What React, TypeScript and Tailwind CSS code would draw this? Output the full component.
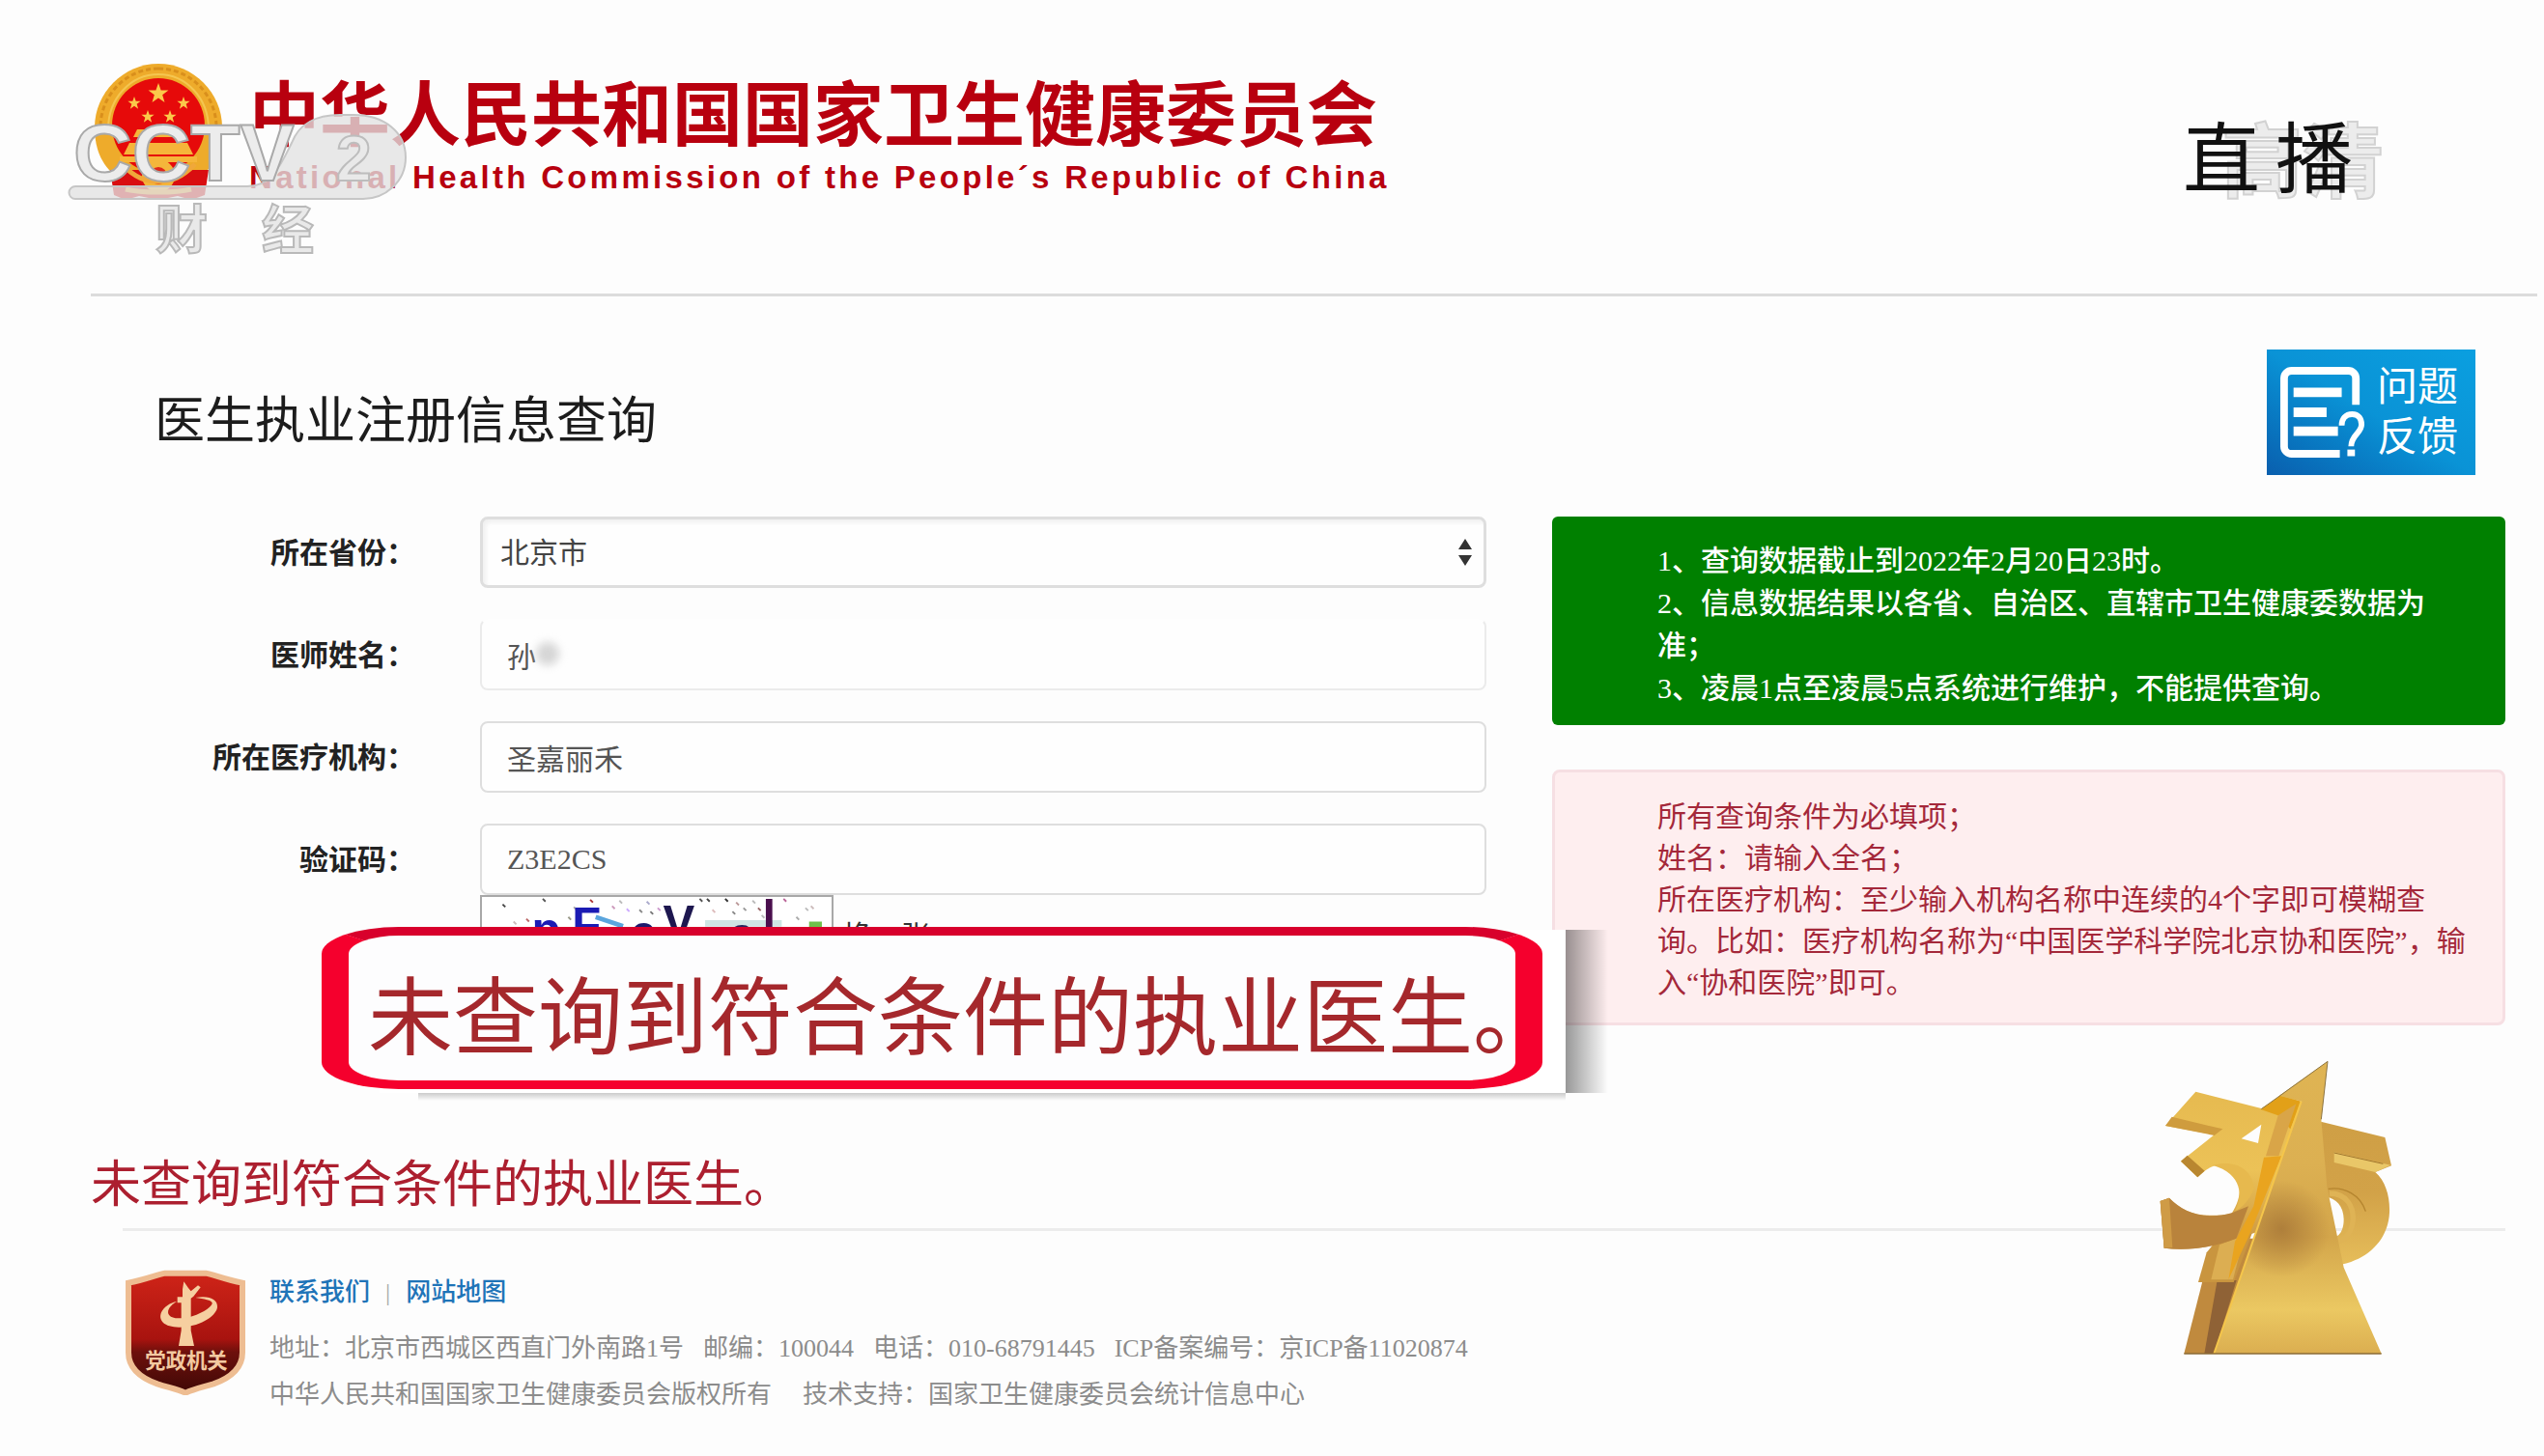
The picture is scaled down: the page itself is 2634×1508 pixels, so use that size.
import { useState } from "react";
import type { ReactNode } from "react";

const SANS = "font-['Liberation_Sans','Noto_Sans_CJK_SC',sans-serif]";
const SERIF = "font-['Liberation_Serif','Noto_Sans_CJK_SC',serif]";

const INPUT_CLASS =
  "h-[74px] w-full rounded-lg border-2 bg-[#fefefe] px-[26px] text-[30px] text-[#555] outline-none focus:border-neutral-400";

const NOTICES = [
  "1、查询数据截止到2022年2月20日23时。",
  "2、信息数据结果以各省、自治区、直辖市卫生健康委数据为准；",
  "3、凌晨1点至凌晨5点系统进行维护，不能提供查询。",
];

const HINTS = [
  "所有查询条件为必填项；",
  "姓名：请输入全名；",
  "所在医疗机构：至少输入机构名称中连续的4个字即可模糊查询。比如：医疗机构名称为“中国医学科学院北京协和医院”，输入“协和医院”即可。",
];

const NO_RESULT = "未查询到符合条件的执业医生。";

// [x, y, colour] of the noise dots behind the captcha letters
const CAPTCHA_DOTS: [number, number, string][] = [
  [14, 8, "#444"],
  [58, 2, "#555"],
  [110, 3, "#a33"],
  [92, 11, "#aaa"],
  [86, 22, "#998"],
  [134, 10, "#c9b"],
  [142, 4, "#bbb"],
  [150, 13, "#caf"],
  [164, 14, "#888"],
  [172, 5, "#aac"],
  [176, 16, "#777"],
  [184, 12, "#c9c"],
  [230, 2, "#555"],
  [238, 2, "#444"],
  [244, 14, "#dbb"],
  [258, 2, "#333"],
  [266, 16, "#888"],
  [270, 6, "#b99"],
  [278, 12, "#999"],
  [288, 4, "#bbb"],
  [294, 12, "#966"],
  [298, 20, "#bbb"],
  [322, 2, "#b69"],
  [336, 22, "#aaa"],
  [346, 12, "#bbb"],
  [352, 10, "#cbb"],
  [26, 27, "#cbb"],
  [40, 24, "#b66"],
];

function Star({ x, y, size }: { x: number; y: number; size: number }) {
  return (
    <path
      transform={`translate(${x} ${y}) scale(${size})`}
      d="M0-10 2.4-3.2 9.5-3.1 3.8 1.2 5.9 8.1 0 4-5.9 8.1-3.8 1.2-9.5-3.1-2.4-3.2Z"
      fill="#fbc94a"
    />
  );
}

function NationalEmblem() {
  return (
    <svg viewBox="0 0 132 144" className="h-36 w-[132px] shrink-0" role="img" aria-label="国徽">
      <path d="M66 2C102 2 132 32 132 68c0 26-10 42-24 52H24C10 110 0 94 0 68 0 32 30 2 66 2Z" fill="#eeab2b" />
      <path d="M66 7c33 0 60 27 60 61M66 7C33 7 6 34 6 68" fill="none" stroke="#d98f1c" strokeWidth="3" strokeDasharray="5 3" />
      <path d="M66 13c29 0 52 25 52 57M66 13C37 13 14 38 14 70" fill="none" stroke="#f5c650" strokeWidth="2" />
      <ellipse cx="66" cy="66" rx="48" ry="49" fill="#e60a0a" />
      <Star x={66} y={33} size={1.1} />
      <Star x={41} y={43} size={0.7} />
      <Star x={92} y={43} size={0.7} />
      <Star x={55} y={57} size={0.7} />
      <Star x={78} y={57} size={0.7} />
      <path d="M44 70h44l4 8H40ZM36 84h60l6 12H30ZM26 98h80v6H26Z" fill="#f6b53a" />
      <path d="M16 112h102l-4 26-14 5-14-4-20 4-20-4-14 4-12-5Z" fill="#d90d10" />
      <circle cx="66" cy="118" r="17" fill="#f4b63b" />
      <circle cx="66" cy="118" r="9" fill="#e0271a" />
      <path d="M28 106c14 14 24 18 38 18s24-4 38-18M32 132c16 4 52 4 68 0" fill="none" stroke="#f0a83a" strokeWidth="5" />
    </svg>
  );
}

function ChannelBug() {
  return (
    <div className="pointer-events-none absolute top-[116px] left-[70px] flex flex-col" aria-hidden="true">
      <svg viewBox="0 0 352 92" className="h-[92px] w-[352px]">
        <path
          d="M8 77H186C212 77 222 52 232 32 240 12 256 3 282 3h14c32 0 54 18 54 44S328 90 306 90H8A6 6 0 0 1 8 77Z"
          fill="#e2e2e2"
          fillOpacity="0.78"
          stroke="#c6c6c6"
          strokeWidth="2"
        />
        <text x="6" y="71" fontSize="84" fontWeight="700" fontFamily="Liberation Sans, sans-serif" fill="#ececec" stroke="#a9a9a9" strokeWidth="2">
          CCTV
        </text>
        <text x="278" y="71" fontSize="66" fontWeight="700" fontFamily="Liberation Sans, sans-serif" fill="#e9e9e9" stroke="#bdbdbd" strokeWidth="2">
          2
        </text>
      </svg>
      <div className="flex gap-14 pl-[91px] text-[54px] leading-[64px] font-bold text-[#e9e9e9] [-webkit-text-stroke:2px_#b9b9b9]">
        <span>财</span>
        <span>经</span>
      </div>
    </div>
  );
}

function LiveBug() {
  return (
    <div className="pointer-events-none absolute top-[114px] right-[166px] h-[108px] w-[208px]" aria-hidden="true">
      <span className="absolute top-1 right-0 text-[84px] leading-[104px] font-bold whitespace-nowrap text-[#ececec] [-webkit-text-stroke:2px_#d2d2d2]">
        高清
      </span>
      <span className="absolute top-0 left-0 flex gap-4 text-[80px] leading-[104px] whitespace-nowrap text-[#111]">
        <span>直</span>
        <span>播</span>
      </span>
    </div>
  );
}

function FeedbackButton() {
  return (
    <button
      type="button"
      className="flex h-[130px] w-[216px] shrink-0 cursor-pointer items-center gap-3 bg-linear-to-bl from-[#0a9fe0] via-[#0a93d6] to-[#0a5fae] pl-[14px] text-white"
    >
      <svg viewBox="0 0 90 96" className="h-24 w-[88px] shrink-0" fill="none" stroke="#fff">
        <path d="M80 40V12a8 8 0 0 0-8-8H12a8 8 0 0 0-8 8v72a8 8 0 0 0 8 8h51" strokeWidth="8" />
        <path d="M14 27h51M14 48h35M14 68h47" strokeWidth="10" />
        <path d="M65 62c0-7 4-12 11-12s10 5 10 11c0 9-11 11-11 23" strokeWidth="6" />
        <path d="M71 91h8" strokeWidth="7" />
      </svg>
      <span className="w-[86px] text-left text-[42px] leading-[52px]">
        问题
        <br />
        反馈
      </span>
    </button>
  );
}

function Field({ id, label, children }: { id: string; label: string; children: ReactNode }) {
  return (
    <div className="grid grid-cols-[430px_1fr] items-center gap-[67px]">
      <label htmlFor={id} className="text-right text-[30px] font-bold text-[#222]">
        {label}：
      </label>
      <div className="relative">{children}</div>
    </div>
  );
}

function Captcha() {
  return (
    <svg viewBox="0 0 366 72" className="h-[72px] w-[366px] border-2 border-[#a8a8a8] bg-white" role="img" aria-label="验证码图片">
      {CAPTCHA_DOTS.map(([x, y, color]) => (
        <path key={`${x}-${y}`} d={`M${x} ${y}l3 3`} stroke={color} strokeWidth="2" />
      ))}
      <path d="M116 22l30 10" stroke="#5aa5dd" strokeWidth="5" />
      <path d="M236 29h84" stroke="#cfe6e4" strokeWidth="7" />
      <path d="M350 30h14" stroke="#6fc04a" strokeWidth="6" />
      <g fontFamily="Liberation Sans, sans-serif" fontWeight="700" fontSize="52">
        <text x="46" y="54" fill="#1b1bb4">p</text>
        <text x="90" y="49" fill="#1b1bb4">F</text>
        <text x="154" y="57" fill="#1d1a6d">e</text>
        <text x="190" y="47" fill="#1d174f">V</text>
        <text x="262" y="59" fill="#26265c">a</text>
        <text x="299" y="40" fill="#4a0f4d">l</text>
      </g>
    </svg>
  );
}

function ResultCallout() {
  return (
    <div className="absolute top-[425px] left-[333px] w-[1288px] pb-1">
      <div className="absolute top-[3px] bottom-0 left-full w-11 bg-linear-to-r from-black/40 to-transparent" />
      <div className="absolute top-full right-0 left-[100px] h-2 bg-linear-to-b from-black/20 to-transparent" />
      <div className="absolute top-[3px] right-0 bottom-0 left-[60px] bg-white" />
      <p className="relative w-[1264px] rounded-[80px/28px] border-x-[28px] border-y-[9px] border-t-[#d8002c] border-r-[#f5002d] border-b-[#f5002d] border-l-[#f5002d] bg-[#fdfdfe] pt-6 pl-5 text-[88px] leading-[126px] whitespace-nowrap text-[#a5282c]">
        {NO_RESULT}
      </p>
    </div>
  );
}

function GovernmentShield() {
  return (
    <svg viewBox="24 36 378 388" className="h-[130px] w-[126px] shrink-0" role="img" aria-label="党政机关">
      <defs>
        <linearGradient id="shield" x1="0" y1="0" x2="0" y2="1">
          <stop offset="0" stopColor="#cf2418" />
          <stop offset="0.55" stopColor="#a8130f" />
          <stop offset="0.66" stopColor="#6d100c" />
          <stop offset="1" stopColor="#3f0806" />
        </linearGradient>
      </defs>
      <path
        d="M36 76C90 66 120 52 150 46h126c30 6 60 20 114 30v216c0 50-40 80-90 98-40 12-60 16-87 28-27-12-50-16-87-28-50-18-90-48-90-98Z"
        fill="url(#shield)"
        stroke="#eebd92"
        strokeWidth="18"
      />
      <g fill="#f6cfa0">
        <path d="M208 72l14 20 8 10 22-18 8 6-22 28-8 6v100l10 48h-48l8-48V138h-12v-18h16v-24Z" />
        <path d="M244 122c44-8 70 6 68 30-4 30-60 62-118 62-48 0-66-22-56-46 8-18 28-30 48-34-20 12-30 26-26 38 6 16 40 18 74 8 38-12 64-32 62-42-2-8-24-12-52-16Z" />
      </g>
      <text x="88" y="342" fontSize="64" fontWeight="700" fontFamily="Noto Sans CJK SC, sans-serif" fill="#f3c9a0">
        党政机关
      </text>
    </svg>
  );
}

function GoldTrophy() {
  return (
    <svg
      viewBox="160 80 735 930"
      className="pointer-events-none absolute right-[155px] bottom-[102px] h-[310px] w-[245px]"
      role="img"
      aria-label="315"
    >
      <defs>
        <linearGradient id="spire" x1="0" y1="0" x2="0" y2="1">
          <stop offset="0" stopColor="#dfb453" />
          <stop offset="0.35" stopColor="#dcb052" />
          <stop offset="0.6" stopColor="#d3a54a" />
          <stop offset="0.85" stopColor="#ebc862" />
          <stop offset="1" stopColor="#dbae50" />
        </linearGradient>
        <radialGradient id="spireShade" gradientUnits="userSpaceOnUse" cx="545" cy="610" r="150">
          <stop offset="0" stopColor="#a87838" stopOpacity="0.85" />
          <stop offset="1" stopColor="#a87838" stopOpacity="0" />
        </radialGradient>
        <linearGradient id="digit" x1="0" y1="0" x2="0" y2="1">
          <stop offset="0" stopColor="#e6ba50" />
          <stop offset="0.5" stopColor="#ecc257" />
          <stop offset="1" stopColor="#c99340" />
        </linearGradient>
        <linearGradient id="digitRight" x1="0" y1="0" x2="0" y2="1">
          <stop offset="0" stopColor="#cf9f45" />
          <stop offset="0.5" stopColor="#d2a248" />
          <stop offset="1" stopColor="#e6bd5a" />
        </linearGradient>
      </defs>

      {/* back leg of the spire */}
      <path d="M350 640 300 770 242 998H340L470 640Z" fill="#c08a3e" />
      <path d="M345 770h60L335 998h-30Z" fill="#8f6236" />
      <path d="M312 684 286 776h110l60-160h-90Z" fill="#c9953f" />
      <path d="M352 660 326 768h68l36-140Z" fill="#dcae52" />

      {/* right-hand five */}
      <path
        fillRule="evenodd"
        d="M670 278 866 326 886 414 836 434C868 462 882 510 880 560 876 640 820 700 736 720L660 690V280ZM684 512C712 514 738 540 738 580 738 608 730 625 716 634Z"
        fill="url(#digitRight)"
      />
      <path d="M708 372 884 412 836 434 708 404Z" fill="#e9c768" />
      <path d="M708 374 860 408" stroke="#a0752c" strokeWidth="3" />
      <path d="M690 486C740 478 790 505 806 556" fill="none" stroke="#b5852f" strokeWidth="4" />
      <path d="M694 500C745 500 772 540 766 590 760 625 742 645 716 650" fill="none" stroke="#dfb355" strokeWidth="16" />

      {/* left-hand three */}
      <path
        fillRule="evenodd"
        d="M278 184 482 236 550 192 602 214 590 300 470 620 404 640C340 665 260 680 180 670L168 524 196 514C235 560 300 580 390 562 415 525 422 480 408 448 380 400 335 398 284 450L232 400 336 318 184 290ZM482 286 420 330 472 344Z"
        fill="url(#digit)"
      />
      <path d="M184 290 204 262 362 300 336 320Z" fill="#cf9c3e" />
      <path d="M168 524 196 514C240 560 310 585 392 560L442 540 404 640C340 665 260 680 180 670Z" fill="#b9833c" />
      <path d="M168 524 196 514 206 668 180 670Z" fill="#cf9b46" />
      <path d="M232 400 252 382 306 430 284 450Z" fill="#b98730" />
      <path d="M330 412C400 395 450 420 460 484 440 530 420 545 400 555 424 510 426 440 330 412Z" fill="#e7b94e" />
      <path d="M482 240 540 196 606 214 572 300 534 258Z" fill="#e2a018" />
      <path d="M534 258 590 222 536 384H496Z" fill="#d9a548" />
      <path d="M490 388 545 384 440 640 380 768 400 650 458 540Z" fill="#e9a41f" />

      {/* spire */}
      <path d="M688 90 668 270 686 480 738 730 855 998H335L606 214 538 196Z" fill="url(#spire)" />
      <path d="M688 90 668 270 686 480 738 730 855 998H335L606 214 538 196Z" fill="url(#spireShade)" />
      <path d="M606 214 335 998" stroke="#f5c64b" strokeWidth="6" />
      <path d="M242 998H855" stroke="#8a6a34" strokeWidth="4" />
      <path d="M482 238 688 90 668 270" fill="none" stroke="#8d7440" strokeWidth="3" />
    </svg>
  );
}

export default function App() {
  const [province, setProvince] = useState("北京市");
  const [doctor, setDoctor] = useState("孙");
  const [hospital, setHospital] = useState("圣嘉丽禾");
  const [code, setCode] = useState("Z3E2CS");

  return (
    <div className={`relative min-h-screen overflow-hidden bg-[#fdfdfd] ${SERIF}`} lang="zh-CN">
      <header className={`mr-[7px] ml-[94px] flex gap-7 border-b-[3px] border-[#dcdcdc] pt-16 pb-24 pl-1 ${SANS}`}>
        <NationalEmblem />
        <div className="flex flex-col justify-end text-[#b8000f]">
          <h1 className="text-[73px] leading-[80px] font-bold whitespace-nowrap">中华人民共和国国家卫生健康委员会</h1>
          <p className="text-[33px] leading-[48px] font-bold tracking-widest whitespace-nowrap">
            National Health Commission of the People´s Republic of China
          </p>
        </div>
      </header>

      <main>
        <div className="flex items-center justify-between pt-[55px] pr-[71px] pl-40">
          <h2 className="pt-5 text-[52px] text-[#1c1c1c]">医生执业注册信息查询</h2>
          <FeedbackButton />
        </div>

        <section className="relative mt-[43px] grid grid-cols-[1539fr_987fr] items-start gap-[68px] pr-10">
          <form className="flex flex-col gap-8" onSubmit={(e) => e.preventDefault()}>
            <Field id="province" label="所在省份">
              <select
                id="province"
                value={province}
                onChange={(e) => setProvince(e.currentTarget.value)}
                className="h-[74px] w-full appearance-none rounded-lg border-[3px] border-[#dedede] bg-[#fefefe] px-[18px] text-[30px] text-[#444] shadow-[inset_3px_3px_4px_#f0f0f0] outline-none"
              >
                <option>北京市</option>
              </select>
              <svg viewBox="0 0 16 28" className="pointer-events-none absolute top-[23px] right-[14px] h-7 w-4" fill="#333">
                <path d="M8 0l7 11H1ZM8 28l7-11H1Z" />
              </svg>
            </Field>

            <Field id="doctor" label="医师姓名">
              <input
                id="doctor"
                value={doctor}
                onChange={(e) => setDoctor(e.currentTarget.value)}
                className={`${INPUT_CLASS} border-[#ebebeb] border-t-transparent`}
              />
              <span className="pointer-events-none absolute top-6 left-[58px] size-6 rounded-full bg-[#d6d6d6] blur-xs" />
            </Field>

            <Field id="hospital" label="所在医疗机构">
              <input
                id="hospital"
                value={hospital}
                onChange={(e) => setHospital(e.currentTarget.value)}
                className={`${INPUT_CLASS} border-[#dedede]`}
              />
            </Field>

            <div>
              <Field id="code" label="验证码">
                <input
                  id="code"
                  value={code}
                  onChange={(e) => setCode(e.currentTarget.value)}
                  className={`${INPUT_CLASS} border-[#dedede]`}
                />
              </Field>
              <div className="flex items-center gap-2.5 pl-[497px]">
                <Captcha />
                <button type="button" className="cursor-pointer pt-3 text-[30px] text-[#333]">
                  换一张
                </button>
              </div>
            </div>
          </form>

          <aside className="flex flex-col gap-[46px] text-[30px]">
            <div className="rounded-md bg-[#008000] pt-6 pr-[30px] pb-4 pl-[109px] leading-[44px] font-medium text-white">
              {NOTICES.map((line) => (
                <p key={line}>{line}</p>
              ))}
            </div>
            <div className="rounded-lg border-[3px] border-[#f6dfe3] bg-[#feeeef] pt-6 pr-[28px] pb-5 pl-[106px] leading-[43px] text-[#a4283a]">
              {HINTS.map((line) => (
                <p key={line}>{line}</p>
              ))}
            </div>
          </aside>

          <ResultCallout />
        </section>

        <p className="mt-[134px] pl-[94px] text-[52px] leading-[64px] text-[#ac1f2f]">{NO_RESULT}</p>
      </main>

      <footer className="mt-3 mr-10 ml-[127px] flex gap-6 border-t-[3px] border-[#ececec] pt-10 pb-9 pl-0.5 text-[26px] leading-[48px] text-[#8c8c8c]">
        <GovernmentShield />
        <div>
          <nav className="mb-2.5 flex gap-4 font-medium text-[#1f74b8]">
            <a href="#contact">联系我们</a>
            <span className="text-[#aaa]">|</span>
            <a href="#sitemap">网站地图</a>
          </nav>
          <p className="flex gap-5">
            <span>地址：北京市西城区西直门外南路1号</span>
            <span>邮编：100044</span>
            <span>电话：010-68791445</span>
            <span>ICP备案编号：京ICP备11020874</span>
          </p>
          <p className="flex gap-8">
            <span>中华人民共和国国家卫生健康委员会版权所有</span>
            <span>技术支持：国家卫生健康委员会统计信息中心</span>
          </p>
        </div>
      </footer>

      <ChannelBug />
      <LiveBug />
      <GoldTrophy />
    </div>
  );
}
